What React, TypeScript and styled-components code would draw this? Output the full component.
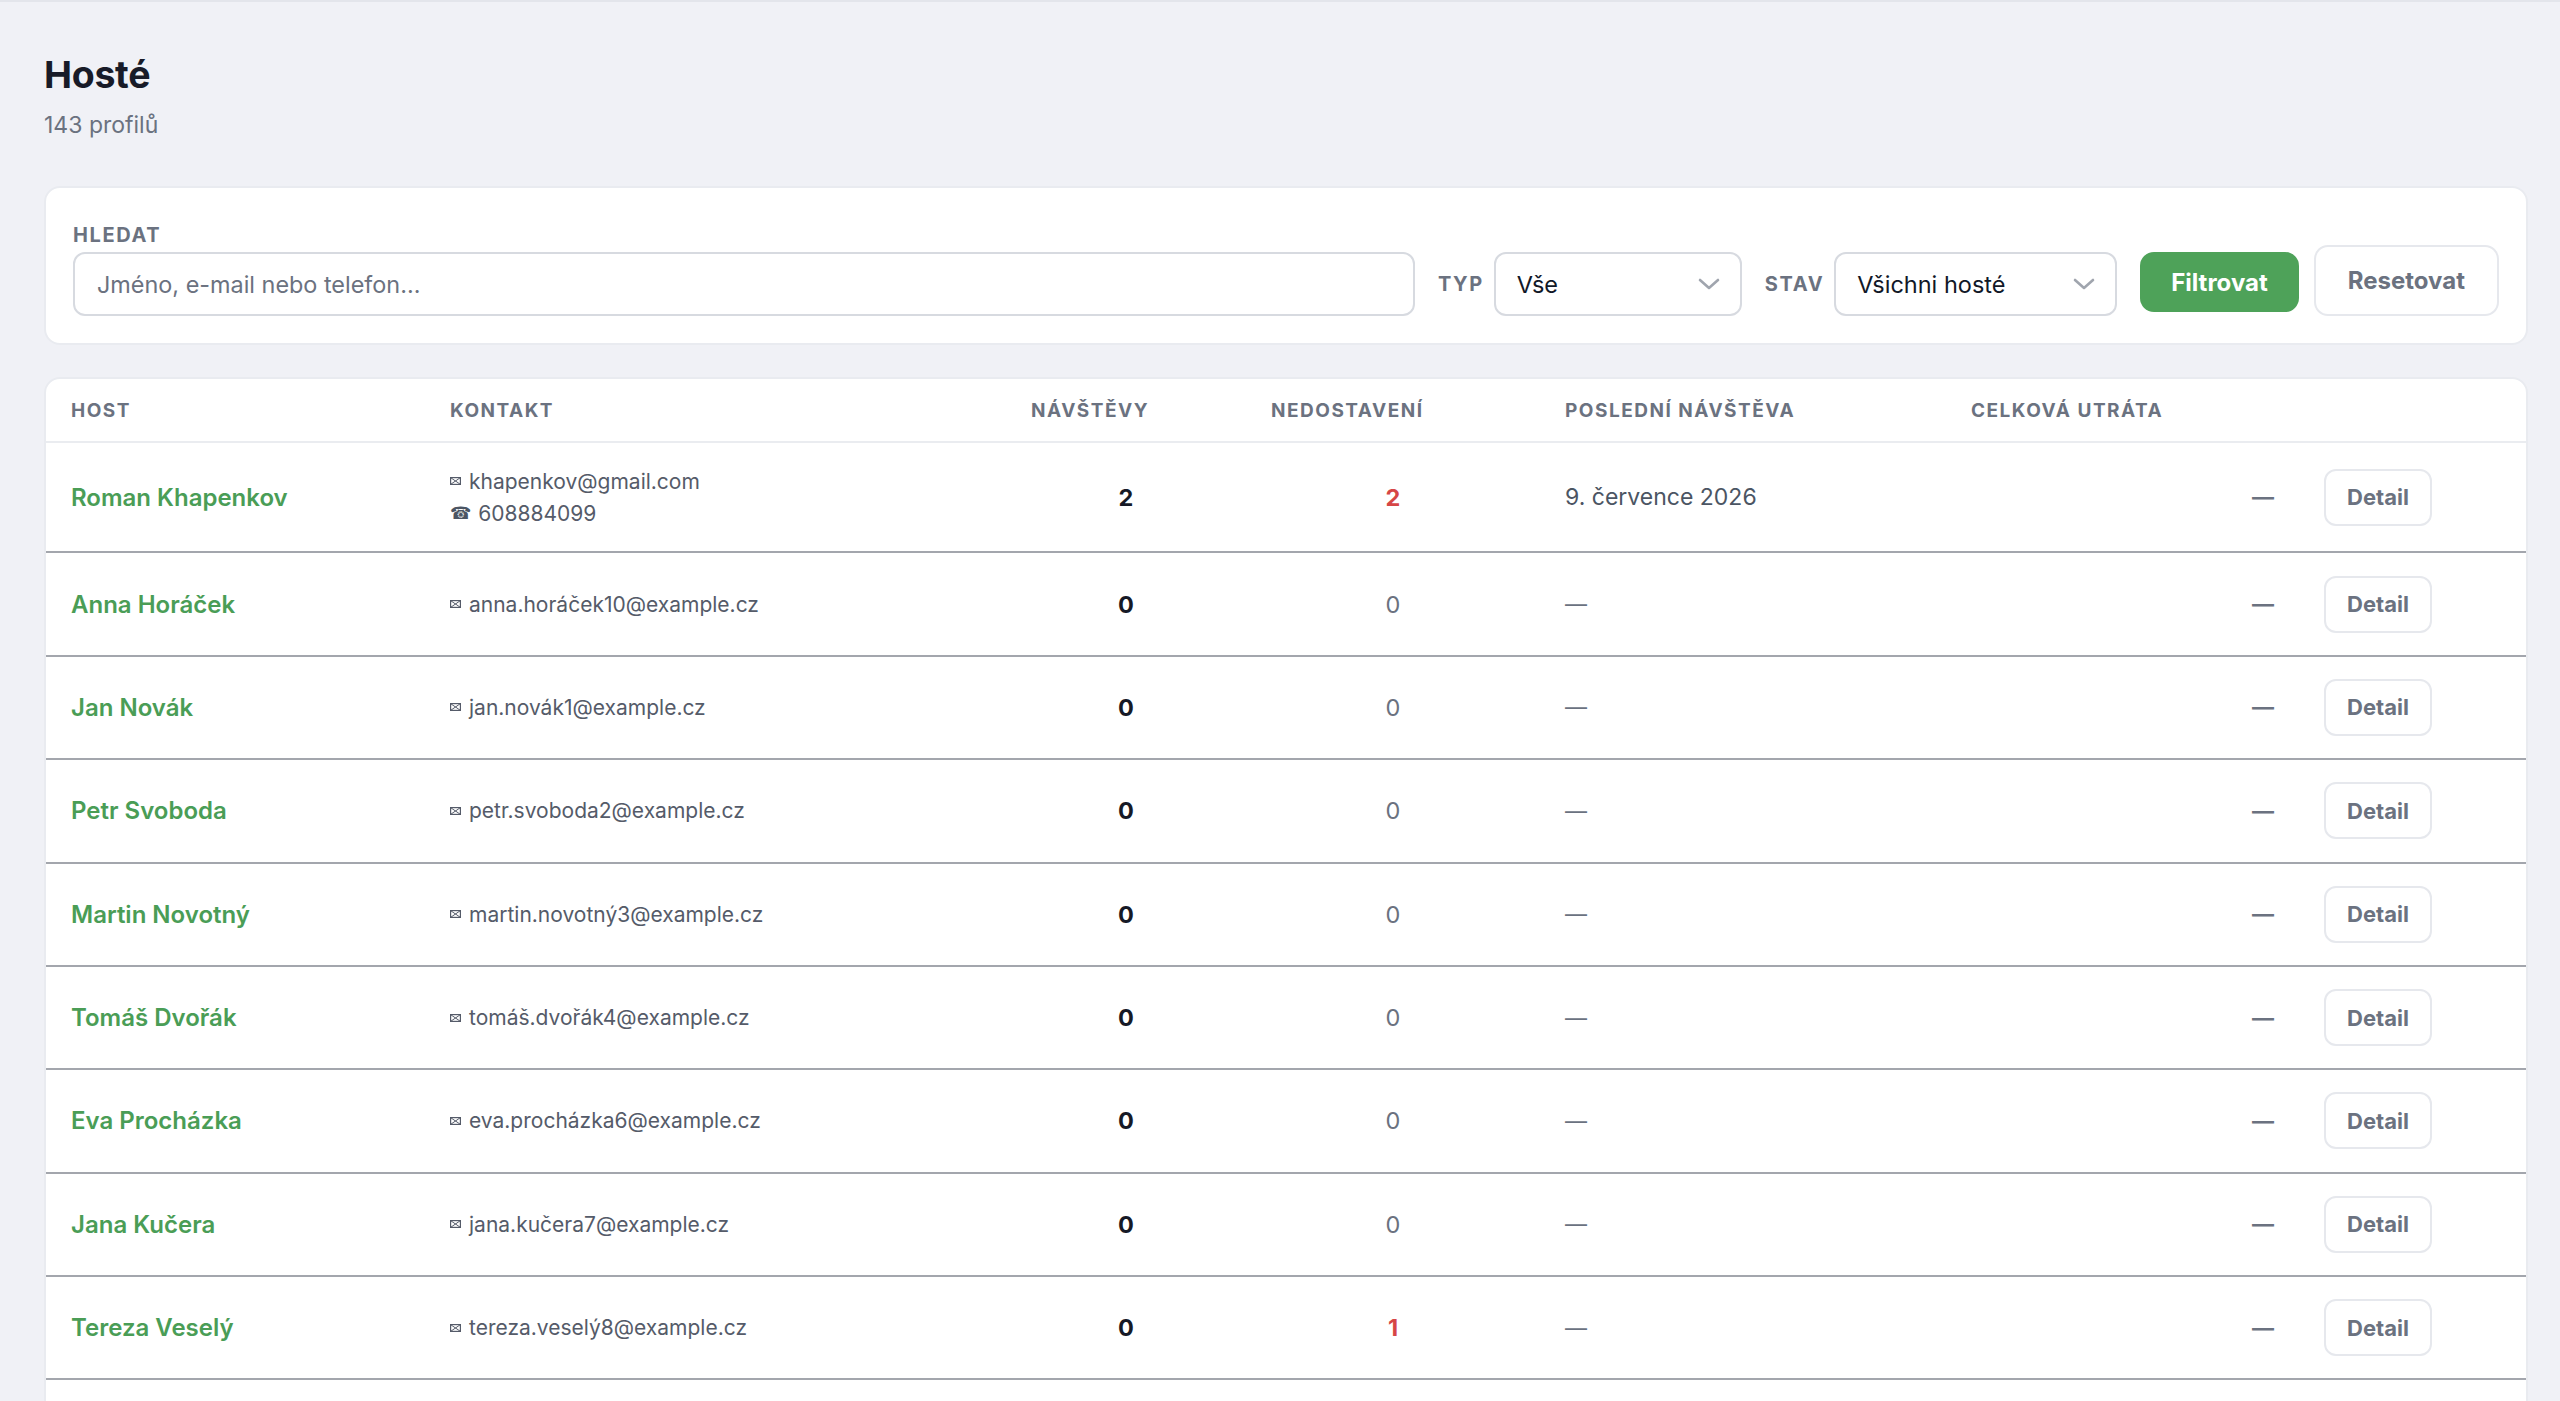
import React from 'react';
import styled, { createGlobalStyle } from 'styled-components';

// ===== TYPY =====
interface Guest {
  name: string;
  email: string;
  phone?: string;
  visits: number;
  noShows: number;
  lastVisit?: string;
}

// ===== GLOBÁLNÍ STYLY =====
const GlobalStyle = createGlobalStyle`
  html, body {
    margin: 0;
    padding: 0;
    background: #f0f1f6;
    font-family: Inter, "Noto Sans", "Liberation Sans", sans-serif;
    -webkit-font-smoothing: antialiased;
  }
  * { box-sizing: border-box; }
`;

const COLUMNS = '379px 581px 240px 294px 406px 353px 1fr';

// ===== STYLED COMPONENTS =====
const Page = styled.div`
  min-height: 100vh;
  border-top: 2px solid #e3e5eb;
  padding: 51px 32px 40px 44px;
`;

const Title = styled.h1`
  margin: 0;
  font-size: 37.5px;
  line-height: 44px;
  font-weight: 700;
  color: #181b28;
  letter-spacing: -0.3px;
`;

const Subtitle = styled.p`
  margin: 13px 0 0;
  font-size: 23px;
  line-height: 30px;
  color: #6b7280;
`;

const Card = styled.section`
  background: #ffffff;
  border: 2px solid #e9ebf0;
  border-radius: 16px;
`;

const FilterCard = styled(Card)`
  margin-top: 46px;
  padding: 33px 27px 27px;
  display: flex;
  align-items: flex-end;
  gap: 23px;
`;

const SearchField = styled.div`
  flex: 1;
  display: flex;
  flex-direction: column;
`;

const FieldLabel = styled.label`
  font-size: 20px;
  line-height: 28px;
  font-weight: 700;
  letter-spacing: 1.6px;
  text-transform: uppercase;
  color: #6b7280;
`;

const SearchLabel = styled(FieldLabel)`
  margin-bottom: 3px;
`;

const SearchInput = styled.input`
  height: 64px;
  width: 100%;
  border: 2px solid #d7dae0;
  border-radius: 12px;
  padding: 0 22px;
  font-family: inherit;
  font-size: 23.4px;
  color: #111827;
  background: #ffffff;
  outline: none;

  &::placeholder {
    color: #6b7280;
  }
`;

const InlineField = styled.div`
  display: flex;
  align-items: center;
  gap: 10px;
  height: 64px;
`;

const SelectBox = styled.button<{ $width: number }>`
  width: ${p => p.$width}px;
  height: 64px;
  display: flex;
  align-items: center;
  justify-content: space-between;
  padding: 0 20px 0 21px;
  border: 2px solid #d7dae0;
  border-radius: 12px;
  background: #ffffff;
  font-family: inherit;
  font-size: 23.5px;
  color: #111827;
  cursor: pointer;
`;

const ButtonGroup = styled.div`
  display: flex;
  align-items: flex-end;
  gap: 15px;
`;

const PrimaryButton = styled.button`
  height: 60px;
  margin-bottom: 4px;
  padding: 0 31px;
  border: none;
  border-radius: 14px;
  background: #4ea259;
  color: #ffffff;
  font-family: inherit;
  font-size: 24px;
  font-weight: 700;
  cursor: pointer;
`;

const SecondaryButton = styled.button`
  height: 71px;
  padding: 0 32px;
  border: 2px solid #e6e8ed;
  border-radius: 14px;
  background: #ffffff;
  color: #6b7280;
  font-family: inherit;
  font-size: 24px;
  font-weight: 700;
  cursor: pointer;
`;

const TableCard = styled(Card)`
  margin-top: 32px;
  overflow: hidden;
`;

const HeaderRow = styled.div`
  display: grid;
  grid-template-columns: ${COLUMNS};
  height: 64px;
  align-items: center;
  border-bottom: 2px solid #eaecf0;
`;

const HeaderCell = styled.div`
  padding: 0 25px;
  font-size: 19px;
  font-weight: 700;
  letter-spacing: 1.5px;
  text-transform: uppercase;
  color: #6b7280;
  white-space: nowrap;
`;

const Row = styled.div`
  display: grid;
  grid-template-columns: ${COLUMNS};
  align-items: center;
  border-bottom: 2px solid #a3a6ad;
`;

const Cell = styled.div<{ $align?: 'left' | 'center' | 'right' }>`
  padding: 22.2px 25px;
  text-align: ${p => p.$align || 'left'};
  font-size: 23px;
  color: #4b5563;
  white-space: nowrap;
`;

const GuestName = styled.a`
  font-size: 24px;
  font-weight: 600;
  color: #4a9d56;
  text-decoration: none;
`;

const ContactList = styled.div`
  display: flex;
  flex-direction: column;
`;

const ContactLine = styled.div`
  display: flex;
  align-items: center;
  gap: 8px;
  height: 32px;
  font-size: 21px;
  color: #555b69;
`;

const PhoneGlyph = styled.span`
  font-family: "DejaVu Sans", sans-serif;
  font-size: 17px;
  line-height: 1;
  color: #4b5563;
  margin-right: -1px;
`;

const Count = styled.span<{ $tone: 'strong' | 'danger' | 'muted' }>`
  font-size: 23.5px;
  font-weight: ${p => (p.$tone === 'muted' ? 400 : 700)};
  color: ${p =>
    p.$tone === 'strong' ? '#161a26' : p.$tone === 'danger' ? '#d64646' : '#6b7280'};
`;

const Dash = styled.span<{ $bold?: boolean }>`
  font-size: 22px;
  font-weight: ${p => (p.$bold ? 700 : 400)};
  color: #6b7280;
`;

const DetailButton = styled.button`
  height: 57px;
  padding: 0 21px;
  border: 2px solid #e6e8ed;
  border-radius: 12px;
  background: #ffffff;
  color: #6b7280;
  font-family: inherit;
  font-size: 22px;
  font-weight: 700;
  cursor: pointer;
`;

// ===== IKONY =====
const Chevron = () => (
  <svg width="22" height="12" viewBox="0 0 22 12" fill="none">
    <polyline points="2,2 11,10 20,2" stroke="#a0a5ae" strokeWidth="2.6" strokeLinecap="round" strokeLinejoin="round" />
  </svg>
);

const MailIcon = () => (
  <svg width="11" height="8" viewBox="0 0 11 8" fill="none">
    <rect x="0.6" y="0.6" width="9.8" height="6.8" stroke="#555b69" strokeWidth="1.2" />
    <path d="M0.6 0.6 L10.4 7.4 M10.4 0.6 L0.6 7.4" stroke="#555b69" strokeWidth="1" />
  </svg>
);

// ===== DATA =====
const guests: Guest[] = [
  { name: 'Roman Khapenkov', email: 'khapenkov@gmail.com', phone: '608884099', visits: 2, noShows: 2, lastVisit: '9. července 2026' },
  { name: 'Anna Horáček', email: 'anna.horáček10@example.cz', visits: 0, noShows: 0 },
  { name: 'Jan Novák', email: 'jan.novák1@example.cz', visits: 0, noShows: 0 },
  { name: 'Petr Svoboda', email: 'petr.svoboda2@example.cz', visits: 0, noShows: 0 },
  { name: 'Martin Novotný', email: 'martin.novotný3@example.cz', visits: 0, noShows: 0 },
  { name: 'Tomáš Dvořák', email: 'tomáš.dvořák4@example.cz', visits: 0, noShows: 0 },
  { name: 'Eva Procházka', email: 'eva.procházka6@example.cz', visits: 0, noShows: 0 },
  { name: 'Jana Kučera', email: 'jana.kučera7@example.cz', visits: 0, noShows: 0 },
  { name: 'Tereza Veselý', email: 'tereza.veselý8@example.cz', visits: 0, noShows: 1 },
  { name: 'Lucie Černý', email: 'lucie.černý9@example.cz', visits: 0, noShows: 0 },
];

const headers = ['Host', 'Kontakt', 'Návštěvy', 'Nedostavení', 'Poslední návštěva', 'Celková utráta', ''];

// ===== KOMPONENTA =====
export default function App() {
  return (
    <>
      <GlobalStyle />
      <Page>
        <Title>Hosté</Title>
        <Subtitle>143 profilů</Subtitle>

        <FilterCard>
          <SearchField>
            <SearchLabel htmlFor="q">Hledat</SearchLabel>
            <SearchInput id="q" placeholder="Jméno, e-mail nebo telefon…" />
          </SearchField>

          <InlineField>
            <FieldLabel>Typ</FieldLabel>
            <SelectBox $width={248}>
              <span>Vše</span>
              <Chevron />
            </SelectBox>
          </InlineField>

          <InlineField>
            <FieldLabel>Stav</FieldLabel>
            <SelectBox $width={283}>
              <span>Všichni hosté</span>
              <Chevron />
            </SelectBox>
          </InlineField>

          <ButtonGroup>
            <PrimaryButton>Filtrovat</PrimaryButton>
            <SecondaryButton>Resetovat</SecondaryButton>
          </ButtonGroup>
        </FilterCard>

        <TableCard>
          <HeaderRow>
            {headers.map((h, i) => (
              <HeaderCell key={i}>{h}</HeaderCell>
            ))}
          </HeaderRow>

          {guests.map(g => (
            <Row key={g.email}>
              <Cell>
                <GuestName href="#">{g.name}</GuestName>
              </Cell>
              <Cell>
                <ContactList>
                  <ContactLine>
                    <MailIcon />
                    <span>{g.email}</span>
                  </ContactLine>
                  {g.phone && (
                    <ContactLine>
                      <PhoneGlyph>☎</PhoneGlyph>
                      <span>{g.phone}</span>
                    </ContactLine>
                  )}
                </ContactList>
              </Cell>
              <Cell $align="center">
                <Count $tone="strong">{g.visits}</Count>
              </Cell>
              <Cell $align="center">
                <Count $tone={g.noShows > 0 ? 'danger' : 'muted'}>{g.noShows}</Count>
              </Cell>
              <Cell>{g.lastVisit ? g.lastVisit : <Dash>—</Dash>}</Cell>
              <Cell $align="right">
                <Dash $bold>—</Dash>
              </Cell>
              <Cell>
                <DetailButton>Detail</DetailButton>
              </Cell>
            </Row>
          ))}
        </TableCard>
      </Page>
    </>
  );
}
